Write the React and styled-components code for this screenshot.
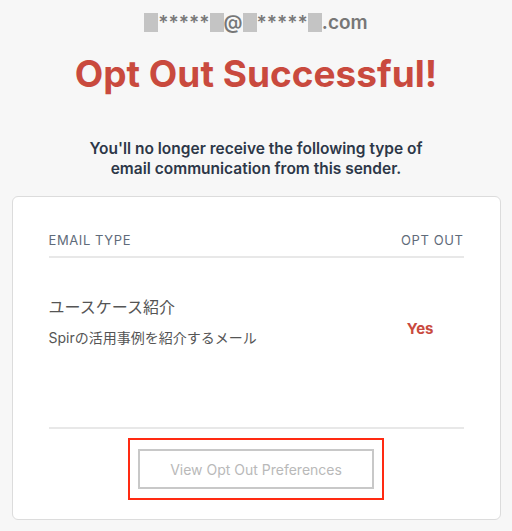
import React from "react";
import styled, { createGlobalStyle } from "styled-components";

const GlobalStyle = createGlobalStyle`
  html, body {
    margin: 0;
    padding: 0;
    background: #f7f7f7;
  }
  body {
    font-family: Inter, "Noto Sans CJK JP", sans-serif;
  }
`;

const Page = styled.div`
  width: 512px;
  height: 531px;
  overflow: hidden;
  display: flex;
  flex-direction: column;
  align-items: center;
`;

const Email = styled.div`
  margin-top: 10px;
  height: 24px;
  display: flex;
  align-items: center;
  font-size: 19px;
  font-weight: 600;
  color: #777;
`;

const Mask = styled.span`
  display: inline-block;
  width: 14px;
  height: 19px;
  background: #c4c4c4;
`;

const Title = styled.h1`
  margin: 18px 0 0;
  font-size: 37px;
  line-height: 44px;
  font-weight: 700;
  color: #c94a3e;
`;

const Lead = styled.p`
  margin: 43px 0 0;
  font-size: 15.5px;
  line-height: 20px;
  font-weight: 600;
  color: #2d3748;
  text-align: center;
`;

const Card = styled.div`
  box-sizing: border-box;
  margin-top: 17px;
  width: 489px;
  height: 324px;
  background: #fff;
  border: 1px solid #dcdcdc;
  border-radius: 6px;
  padding: 0 36px;
  display: flex;
  flex-direction: column;
`;

const HeadRow = styled.div`
  display: flex;
  justify-content: space-between;
  padding: 33px 0 6px;
  border-bottom: 2px solid #e8e8e8;
  font-size: 13px;
  line-height: 20px;
  letter-spacing: 0.6px;
  color: #5f6b7a;
`;

const TypeRow = styled.div`
  flex: 1;
  display: flex;
  justify-content: space-between;
  padding-top: 37px;
  border-bottom: 2px solid #e8e8e8;
`;

const TypeName = styled.div`
  font-size: 16px;
  line-height: 24px;
  color: #555;
`;

const TypeDesc = styled.div`
  margin-top: 9px;
  font-size: 14px;
  line-height: 20px;
  color: #555;
`;

const Yes = styled.div`
  margin: 24px 30px 0 0;
  font-size: 15px;
  font-weight: 700;
  color: #c94a3e;
`;

const Footer = styled.div`
  display: flex;
  justify-content: center;
  padding: 9px 0 19px;
`;

const Highlight = styled.div`
  border: 2px solid #ff2a12;
  padding: 9px 8px;
`;

const Button = styled.button`
  box-sizing: border-box;
  width: 236px;
  height: 40px;
  background: #fff;
  border: 2px solid #c8c8c8;
  font-family: Inter, sans-serif;
  font-size: 14px;
  color: #b9b9b9;
`;

export default function App() {
  return (
    <Page>
      <GlobalStyle />
      <Email>
        <Mask />*****<Mask />@<Mask />*****<Mask />.com
      </Email>
      <Title>Opt Out Successful!</Title>
      <Lead>
        You'll no longer receive the following type of
        <br />
        email communication from this sender.
      </Lead>
      <Card>
        <HeadRow>
          <span>EMAIL TYPE</span>
          <span>OPT OUT</span>
        </HeadRow>
        <TypeRow>
          <div>
            <TypeName>ユースケース紹介</TypeName>
            <TypeDesc>Spirの活用事例を紹介するメール</TypeDesc>
          </div>
          <Yes>Yes</Yes>
        </TypeRow>
        <Footer>
          <Highlight>
            <Button>View Opt Out Preferences</Button>
          </Highlight>
        </Footer>
      </Card>
    </Page>
  );
}
